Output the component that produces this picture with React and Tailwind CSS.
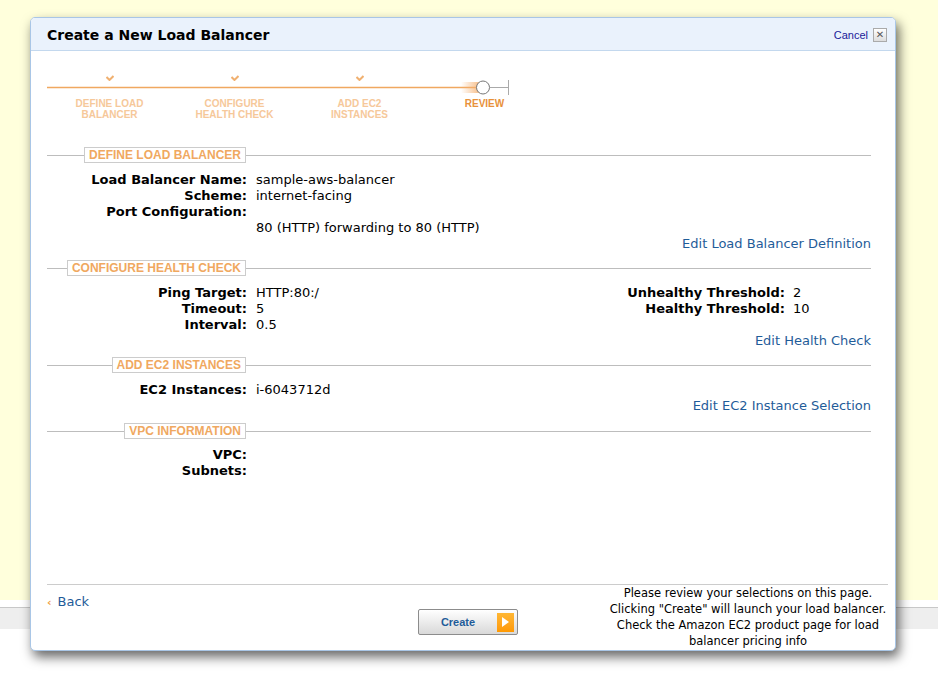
import React from 'react';

const steps = [
  { label: ['DEFINE LOAD', 'BALANCER'], done: true },
  { label: ['CONFIGURE', 'HEALTH CHECK'], done: true },
  { label: ['ADD EC2', 'INSTANCES'], done: true },
  { label: ['REVIEW'], done: false },
];

function Check() {
  return (
    <svg width="8" height="6" viewBox="0 0 8 6">
      <path d="M0.5 2 L3.5 5 L7.5 1" fill="none" stroke="#f0b070" strokeWidth="2" />
    </svg>
  );
}

function SectionHeader({ title }) {
  return (
    <div className="flex h-[16px] items-center">
      <div className="h-px flex-1 bg-[#bdbdbd]" />
      <span className="border border-[#cccccc] bg-white px-[4px] font-['Liberation_Sans'] text-[12px] leading-[14px] font-bold text-[#f0a860]">
        {title}
      </span>
      <div className="h-px w-[625px] bg-[#bdbdbd]" />
    </div>
  );
}

function Row({ label, value }) {
  return (
    <div className="grid h-[16px] grid-cols-[200px_1fr] gap-[9px] leading-[16px]">
      <span className="text-right font-bold">{label}</span>
      <span>{value}</span>
    </div>
  );
}

function EditLink({ children }) {
  return (
    <div className="h-[16px] text-right leading-[16px] text-[#1f5c99]">{children}</div>
  );
}

export default function App() {
  return (
    <div className="relative min-h-[691px] bg-white font-['DejaVu_Sans',sans-serif] text-[13px] text-black">
      {/* page behind the dialog */}
      <div className="h-[600px] bg-[#ffffdc]" />
      <div className="h-[7px]" />
      <div className="h-[22px] border-t border-[#c8c8c8] bg-[#eeeeee]" />

      {/* dialog */}
      <div className="absolute top-[17px] left-[30px] flex h-[634px] w-[866px] flex-col overflow-hidden rounded-[5px] border border-[#a9c6e6] bg-white shadow-[3px_6px_12px_rgba(0,0,0,0.6)]">
        <div className="flex h-[33px] shrink-0 items-center justify-between border-b border-[#c3d8ee] bg-[#eaf2fc] pt-[2px] pr-[8px] pl-[16px]">
          <h1 className="text-[14px] font-bold">Create a New Load Balancer</h1>
          <div className="flex items-center gap-[5px]">
            <span className="font-['Liberation_Sans'] text-[11px] text-[#1a1a99]">Cancel</span>
            <span className="flex h-[14px] w-[14px] items-center justify-center border border-[#aaaaaa] bg-gradient-to-b from-white to-[#dddddd] text-[10px] leading-none text-[#555]">
              ✕
            </span>
          </div>
        </div>

        <div className="flex-1 pr-[24px] pl-[16px]">
          {/* wizard progress */}
          <div className="relative mt-[21px] h-[75px]">
            <svg className="absolute top-0 left-0" width="470" height="30" viewBox="0 0 470 30">
              <defs>
                <linearGradient id="trail" x1="0" x2="1" y1="0" y2="0">
                  <stop offset="0" stopColor="#f5b070" stopOpacity="0" />
                  <stop offset="1" stopColor="#f5b070" stopOpacity="0.8" />
                </linearGradient>
              </defs>
              <line x1="0" y1="15.5" x2="430" y2="15.5" stroke="#f0a860" strokeWidth="1.5" />
              <rect x="414" y="10" width="18" height="11" fill="url(#trail)" />
              <line x1="443" y1="15.5" x2="461" y2="15.5" stroke="#aaaaaa" strokeWidth="1" />
              <line x1="461.5" y1="8" x2="461.5" y2="23" stroke="#aaaaaa" strokeWidth="1" />
              <circle cx="436" cy="15.5" r="6.5" fill="white" stroke="#777777" strokeWidth="1" />
            </svg>
            <div className="grid w-[500px] grid-cols-4">
              {steps.map((s, i) => (
                <div key={i} className="flex flex-col items-center">
                  <div className="flex h-[12px] items-center">{s.done && <Check />}</div>
                  <div
                    className={`mt-[14px] text-center font-['Liberation_Sans'] text-[10px] leading-[11px] font-bold ${
                      s.done ? 'text-[#f6c89a]' : 'text-[#e8913a]'
                    }`}
                  >
                    {s.label.map((l) => (
                      <div key={l}>{l}</div>
                    ))}
                  </div>
                </div>
              ))}
            </div>
          </div>

          <SectionHeader title="DEFINE LOAD BALANCER" />
          <div className="mt-[9px]">
            <Row label="Load Balancer Name:" value="sample-aws-balancer" />
            <Row label="Scheme:" value="internet-facing" />
            <Row label="Port Configuration:" value="" />
            <Row label="" value="80 (HTTP) forwarding to 80 (HTTP)" />
            <EditLink>Edit Load Balancer Definition</EditLink>
          </div>

          <div className="mt-[8px]">
            <SectionHeader title="CONFIGURE HEALTH CHECK" />
          </div>
          <div className="mt-[9px] flex">
            <div className="flex-1">
              <Row label="Ping Target:" value="HTTP:80:/" />
              <Row label="Timeout:" value="5" />
              <Row label="Interval:" value="0.5" />
            </div>
            <div className="w-[308px]">
              <div className="grid h-[16px] grid-cols-[222px_1fr] gap-[8px] leading-[16px]">
                <span className="text-right font-bold">Unhealthy Threshold:</span>
                <span>2</span>
              </div>
              <div className="grid h-[16px] grid-cols-[222px_1fr] gap-[8px] leading-[16px]">
                <span className="text-right font-bold">Healthy Threshold:</span>
                <span>10</span>
              </div>
            </div>
          </div>
          <EditLink>Edit Health Check</EditLink>

          <div className="mt-[8px]">
            <SectionHeader title="ADD EC2 INSTANCES" />
          </div>
          <div className="mt-[9px]">
            <Row label="EC2 Instances:" value="i-6043712d" />
            <EditLink>Edit EC2 Instance Selection</EditLink>
          </div>

          <div className="mt-[9px]">
            <SectionHeader title="VPC INFORMATION" />
          </div>
          <div className="mt-[8px]">
            <Row label="VPC:" value="" />
            <Row label="Subnets:" value="" />
          </div>
        </div>

        {/* footer */}
        <div className="mr-[7px] ml-[16px] flex h-[66px] shrink-0 border-t border-[#cccccc]">
          <div className="w-[371px] shrink-0 pt-[9px] leading-[16px]">
            <span className="mr-[6px] text-[11px] font-bold text-[#f0a040]">‹</span>
            <span className="text-[#1f5c99]">Back</span>
          </div>
          <div className="shrink-0 pt-[24px]">
            <button className="flex h-[26px] w-[100px] items-center rounded-[2px] border border-[#8c8c8c] bg-gradient-to-b from-white to-[#d9d9d9] pr-[3px]">
              <span className="flex-1 font-['Liberation_Sans'] text-[11px] font-bold text-[#1f5c99]">Create</span>
              <span className="flex h-[19px] w-[17px] items-center justify-center bg-gradient-to-b from-[#ffb733] to-[#ff9900]">
                <svg width="7" height="10" viewBox="0 0 7 10">
                  <path d="M0 0 L7 5 L0 10 Z" fill="white" />
                </svg>
              </span>
            </button>
          </div>
          <div className="ml-[90px] w-[280px] shrink-0 text-center text-[11.5px] leading-[16px] whitespace-nowrap">
            Please review your selections on this page.
            <br />
            Clicking "Create" will launch your load balancer.
            <br />
            Check the Amazon EC2 product page for load
            <br />
            balancer pricing info
          </div>
        </div>
      </div>
    </div>
  );
}
